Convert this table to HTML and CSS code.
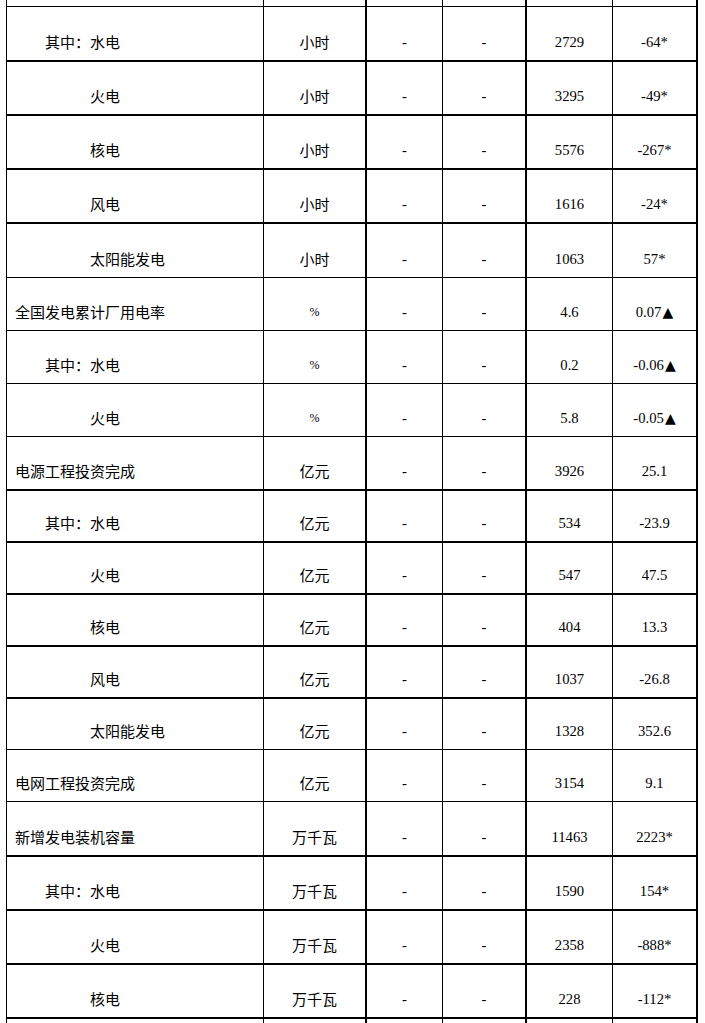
FILE: index.html
```html
<!DOCTYPE html>
<html lang="zh-CN">
<head>
<meta charset="utf-8">
<title>电力工业统计</title>
<link rel="stylesheet" href="styles.css">
</head>
<body>
<div class="sheet">
  <div class="row h7 thin"><div class="cell"></div><div class="cell"></div><div class="cell"></div><div class="cell"></div><div class="cell"></div><div class="cell"></div></div>

  <div class="row h55"><div class="cell name l2">其中：水电</div><div class="cell unit">小时</div><div class="cell">-</div><div class="cell">-</div><div class="cell">2729</div><div class="cell">-64*</div></div>
  <div class="row h54"><div class="cell name l3">火电</div><div class="cell unit">小时</div><div class="cell">-</div><div class="cell">-</div><div class="cell">3295</div><div class="cell">-49*</div></div>
  <div class="row h54"><div class="cell name l3">核电</div><div class="cell unit">小时</div><div class="cell">-</div><div class="cell">-</div><div class="cell">5576</div><div class="cell">-267*</div></div>
  <div class="row h54"><div class="cell name l3">风电</div><div class="cell unit">小时</div><div class="cell">-</div><div class="cell">-</div><div class="cell">1616</div><div class="cell">-24*</div></div>
  <div class="row h54 thin"><div class="cell name l3">太阳能发电</div><div class="cell unit">小时</div><div class="cell">-</div><div class="cell">-</div><div class="cell">1063</div><div class="cell">57*</div></div>

  <div class="row h53 thin"><div class="cell name">全国发电累计厂用电率</div><div class="cell pct">%</div><div class="cell">-</div><div class="cell">-</div><div class="cell">4.6</div><div class="cell">0.07<span class="tri">▲</span></div></div>
  <div class="row h53 thin"><div class="cell name l2">其中：水电</div><div class="cell pct">%</div><div class="cell">-</div><div class="cell">-</div><div class="cell">0.2</div><div class="cell">-0.06<span class="tri">▲</span></div></div>
  <div class="row h53 thin"><div class="cell name l3">火电</div><div class="cell pct">%</div><div class="cell">-</div><div class="cell">-</div><div class="cell">5.8</div><div class="cell">-0.05<span class="tri">▲</span></div></div>

  <div class="row h54"><div class="cell name">电源工程投资完成</div><div class="cell unit">亿元</div><div class="cell">-</div><div class="cell">-</div><div class="cell">3926</div><div class="cell">25.1</div></div>
  <div class="row h52"><div class="cell name l2">其中：水电</div><div class="cell unit">亿元</div><div class="cell">-</div><div class="cell">-</div><div class="cell">534</div><div class="cell">-23.9</div></div>
  <div class="row h52"><div class="cell name l3">火电</div><div class="cell unit">亿元</div><div class="cell">-</div><div class="cell">-</div><div class="cell">547</div><div class="cell">47.5</div></div>
  <div class="row h52"><div class="cell name l3">核电</div><div class="cell unit">亿元</div><div class="cell">-</div><div class="cell">-</div><div class="cell">404</div><div class="cell">13.3</div></div>
  <div class="row h52"><div class="cell name l3">风电</div><div class="cell unit">亿元</div><div class="cell">-</div><div class="cell">-</div><div class="cell">1037</div><div class="cell">-26.8</div></div>
  <div class="row h51 thin"><div class="cell name l3">太阳能发电</div><div class="cell unit">亿元</div><div class="cell">-</div><div class="cell">-</div><div class="cell">1328</div><div class="cell">352.6</div></div>

  <div class="row h52 thin"><div class="cell name">电网工程投资完成</div><div class="cell unit">亿元</div><div class="cell">-</div><div class="cell">-</div><div class="cell">3154</div><div class="cell">9.1</div></div>

  <div class="row h55"><div class="cell name">新增发电装机容量</div><div class="cell unit">万千瓦</div><div class="cell">-</div><div class="cell">-</div><div class="cell">11463</div><div class="cell">2223*</div></div>
  <div class="row h54"><div class="cell name l2">其中：水电</div><div class="cell unit">万千瓦</div><div class="cell">-</div><div class="cell">-</div><div class="cell">1590</div><div class="cell">154*</div></div>
  <div class="row h54"><div class="cell name l3">火电</div><div class="cell unit">万千瓦</div><div class="cell">-</div><div class="cell">-</div><div class="cell">2358</div><div class="cell">-888*</div></div>
  <div class="row h54"><div class="cell name l3">核电</div><div class="cell unit">万千瓦</div><div class="cell">-</div><div class="cell">-</div><div class="cell">228</div><div class="cell">-112*</div></div>
  <div class="row h54"><div class="cell name"></div><div class="cell unit"></div><div class="cell"></div><div class="cell"></div><div class="cell"></div><div class="cell"></div></div>
</div>
</body>
</html>
```

FILE: styles.css
```css
html, body {
  margin: 0;
  padding: 0;
  background: #ffffff;
  color: #000000;
}

.sheet {
  padding-left: 6px;
}

.row {
  display: grid;
  grid-template-columns: 258px 103px 76px 84px 86px 85px;
}

.cell {
  box-sizing: border-box;
  display: flex;
  align-items: flex-end;
  justify-content: center;
  padding-bottom: 9px;
  line-height: 18px;
  border-right: 1px solid #000;
  border-bottom: 2px solid #000;
  font-family: "Liberation Serif", "Times New Roman", serif;
  font-size: 14.67px;
  white-space: nowrap;
}

.cell:nth-child(1) {
  border-left: 1px solid #000;
}

.cell:nth-child(2),
.cell:nth-child(4),
.cell:nth-child(6) {
  border-right-width: 2px;
}

.row.thin .cell {
  border-bottom-width: 1px;
}

.name {
  justify-content: flex-start;
  padding-left: 8px;
  font-family: "Noto Sans CJK SC", "Noto Sans", sans-serif;
  font-size: 15px;
}

.name.l2 { padding-left: 38px; }
.name.l3 { padding-left: 83px; }

.unit {
  font-family: "Noto Sans CJK SC", "Noto Sans", sans-serif;
  font-size: 15px;
}

.pct {
  font-size: 12px;
}

.tri {
  font-family: "DejaVu Sans", sans-serif;
  font-size: 14px;
  margin-left: 1px;
}

.h7 { height: 7px; padding: 0; }
.h7 .cell { padding: 0; }
.h51 { height: 51px; }
.h52 { height: 52px; }
.h53 { height: 53px; }
.h54 { height: 54px; }
.h55 { height: 55px; }
```
